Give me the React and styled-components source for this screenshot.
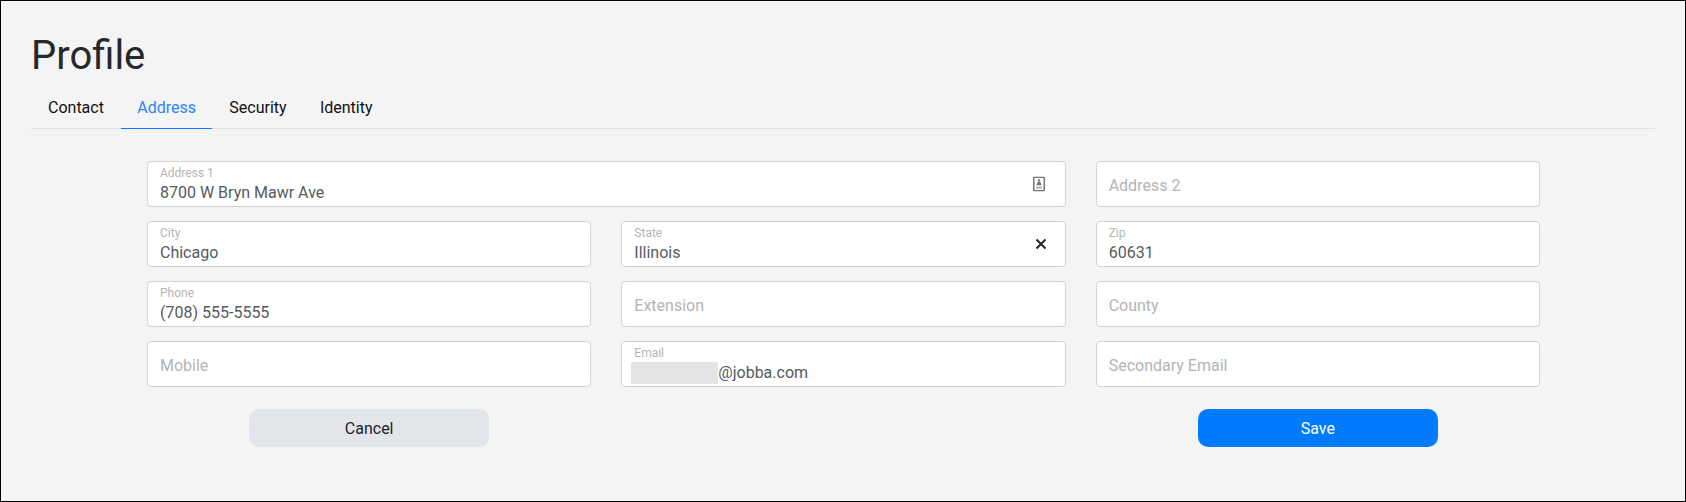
import React from "react";
import styled, { createGlobalStyle } from "styled-components";

const GlobalStyle = createGlobalStyle`
  html, body {
    margin: 0;
    padding: 0;
    background: #f4f4f4;
  }
  * {
    box-sizing: border-box;
  }
`;

const Page = styled.div`
  height: 502px;
  border: 1px solid #000;
  background: #f4f4f4;
  padding: 31px 30px 0;
  font-family: Roboto, sans-serif;
`;

const Title = styled.h1`
  margin: 0;
  font-size: 40px;
  font-weight: 400;
  line-height: 48px;
  color: #25292d;
`;

const Tabs = styled.nav`
  display: flex;
  gap: 1.3px;
  height: 49px;
  padding: 16px 0 0 1px;
  border-bottom: 1px solid #dee2e6;
`;

const Tab = styled.a`
  display: block;
  padding: 0 16px;
  height: 33px;
  font-size: 16px;
  line-height: 24px;
  color: ${(p) => (p.$active ? "#2a85ff" : "#111")};
  border-bottom: 1px solid ${(p) => (p.$active ? "#007bff" : "transparent")};
`;

const Form = styled.div`
  display: grid;
  grid-template-columns: repeat(3, 1fr);
  column-gap: 30px;
  row-gap: 14px;
  margin: 32px 115px 0 116px;
`;

const Field = styled.div`
  position: relative;
  grid-column: ${(p) => (p.$wide ? "span 2" : "span 1")};
  height: 46px;
  padding: 0 12px;
  background: #fff;
  border: 1px solid #ced4da;
  border-radius: 4px;
`;

const FloatLabel = styled.div`
  padding-top: 4px;
  font-size: 12px;
  line-height: 14px;
  color: #b4b4b4;
`;

const Value = styled.div`
  margin-top: 1px;
  font-size: 16px;
  line-height: 24px;
  color: #555b61;
  white-space: nowrap;
`;

const Placeholder = styled.div`
  padding-top: 2px;
  font-size: 16px;
  line-height: 44px;
  color: #b4b4b4;
`;

const Redacted = styled.span`
  display: inline-block;
  width: 87px;
  height: 22px;
  margin-left: -3px;
  vertical-align: -6px;
  background: #e3e4e5;
`;

const FieldIcon = styled.span`
  position: absolute;
  top: 50%;
  right: ${(p) => p.$right}px;
  display: flex;
  transform: translateY(-50%);
`;

const ButtonCell = styled.div`
  display: flex;
  justify-content: center;
  grid-column: ${(p) => p.$column};
  margin-top: 8px;
`;

const Button = styled.button`
  width: 240px;
  height: 38px;
  border: 0;
  border-radius: 10px;
  font-family: inherit;
  font-size: 16px;
  cursor: pointer;
  color: ${(p) => (p.$primary ? "#fff" : "#212529")};
  background: ${(p) => (p.$primary ? "#007bff" : "#e2e6ea")};
`;

function ContactIcon() {
  return (
    <svg width="12" height="15" viewBox="0 0 12 15">
      <rect x="0.75" y="0.75" width="10.5" height="13.5" rx="0.8" fill="#fff" stroke="#70757a" strokeWidth="1.5" />
      <circle cx="6" cy="4" r="1.2" fill="#70757a" />
      <path d="M4.6 5.4h2.8L8.6 8.8H3.4z" fill="#70757a" />
      <path d="M3 10h6v2.2H3z" fill="#b5b8bb" />
    </svg>
  );
}

function ClearIcon() {
  return (
    <svg width="12" height="12" viewBox="0 0 12 12">
      <path d="M1.5 1.5l9 9M10.5 1.5l-9 9" stroke="#212529" strokeWidth="2" fill="none" />
    </svg>
  );
}

function TextField({ label, value, wide, icon, iconRight = 18, children }) {
  if (!label) {
    return (
      <Field $wide={wide}>
        <Placeholder>{value}</Placeholder>
      </Field>
    );
  }
  return (
    <Field $wide={wide}>
      <FloatLabel>{label}</FloatLabel>
      <Value>{children || value}</Value>
      {icon && <FieldIcon $right={iconRight}>{icon}</FieldIcon>}
    </Field>
  );
}

export default function App() {
  return (
    <>
      <GlobalStyle />
      <Page>
        <Title>Profile</Title>
        <Tabs>
          <Tab>Contact</Tab>
          <Tab $active>Address</Tab>
          <Tab>Security</Tab>
          <Tab>Identity</Tab>
        </Tabs>
        <Form>
          <TextField wide label="Address 1" value="8700 W Bryn Mawr Ave" icon={<ContactIcon />} iconRight={20} />
          <TextField value="Address 2" />
          <TextField label="City" value="Chicago" />
          <TextField label="State" value="Illinois" icon={<ClearIcon />} />
          <TextField label="Zip" value="60631" />
          <TextField label="Phone" value="(708) 555-5555" />
          <TextField value="Extension" />
          <TextField value="County" />
          <TextField value="Mobile" />
          <TextField label="Email">
            <Redacted />@jobba.com
          </TextField>
          <TextField value="Secondary Email" />
          <ButtonCell $column="1">
            <Button>Cancel</Button>
          </ButtonCell>
          <ButtonCell $column="3">
            <Button $primary>Save</Button>
          </ButtonCell>
        </Form>
      </Page>
    </>
  );
}
